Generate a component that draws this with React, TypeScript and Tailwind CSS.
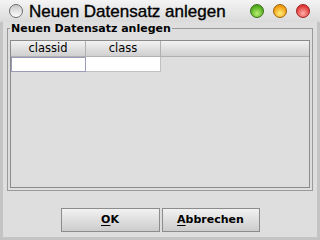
export default function App() {
  const font = { fontFamily: '"DejaVu Sans", sans-serif' };
  return (
    <div className="w-[320px] h-[240px] overflow-hidden bg-[#dedede] flex flex-col" style={font}>
      {/* title bar */}
      <div className="h-[22px] flex items-center bg-gradient-to-b from-[#f4f4f4] to-[#dadada] pl-[9px] pr-[10px]">
        <div className="w-[14px] h-[14px] rounded-full border border-[#6e6e6e] bg-gradient-to-b from-[#c8c8c8] to-[#ffffff]" />
        <span className="ml-[6px] text-[17px] leading-none text-black [font-family:'Liberation_Sans',sans-serif] [-webkit-text-stroke:0.35px_black]">
          Neuen Datensatz anlegen
        </span>
        <div className="ml-auto flex gap-[9px]">
          <div className="w-[14px] h-[14px] rounded-full border border-[#3b6e1a] bg-[radial-gradient(circle_at_50%_70%,#b8f070,#4ea81c_70%)]" />
          <div className="w-[14px] h-[14px] rounded-full border border-[#a0600a] bg-[radial-gradient(circle_at_50%_70%,#fff07a,#f09a10_70%)]" />
          <div className="w-[14px] h-[14px] rounded-full border border-[#a02020] bg-[radial-gradient(circle_at_50%_70%,#ffb0a8,#e03838_70%)]" />
        </div>
      </div>
      {/* window body */}
      <div className="flex-1 flex flex-col border-l-[3px] border-r-[3px] border-b-[3px] border-[#c4c4c4] px-[4px] pb-[5px]">
        {/* group box */}
        <div className="relative mt-[6px] h-[163px] border border-[#9a9a9a] flex flex-col px-[2px] pt-[11px] pb-[2px]">
          <span className="absolute left-[2px] -top-[7px] bg-[#dedede] px-[1px] text-[11px] font-bold leading-[13px] text-black">Neuen Datensatz anlegen</span>
          {/* scroll pane */}
          <div className="flex-1 border border-[#8a8a8a] bg-[#dedede] flex flex-col">
            <div className="h-[16px] flex bg-gradient-to-b from-[#f2f2f2] to-[#cfcfcf] border-b border-[#b0b0b0]">
              <div className="w-[75px] border-r border-[#b0b0b0] flex items-center justify-center text-[11.5px] text-black leading-none">classid</div>
              <div className="w-[75px] border-r border-[#b0b0b0] flex items-center justify-center text-[11.5px] text-black leading-none">class</div>
              <div className="flex-1" />
            </div>
            <div className="h-[15px] flex">
              <div className="w-[75px] bg-white border border-[#9a9aba]" />
              <div className="w-[75px] bg-white border-r border-b border-[#c0c0c0]" />
            </div>
          </div>
        </div>
        {/* buttons */}
        <div className="flex-1 flex items-end justify-center gap-[2px]">
          <button className="w-[99px] h-[24px] border border-[#8c8c8c] bg-gradient-to-b from-[#f2f2f2] to-[#cccccc] text-[11px] font-bold text-black">
            <span className="underline underline-offset-2">O</span>K
          </button>
          <button className="w-[98px] h-[24px] border border-[#8c8c8c] bg-gradient-to-b from-[#f2f2f2] to-[#cccccc] text-[11px] font-bold text-black">
            <span className="underline underline-offset-2">A</span>bbrechen
          </button>
        </div>
      </div>
    </div>
  );
}
